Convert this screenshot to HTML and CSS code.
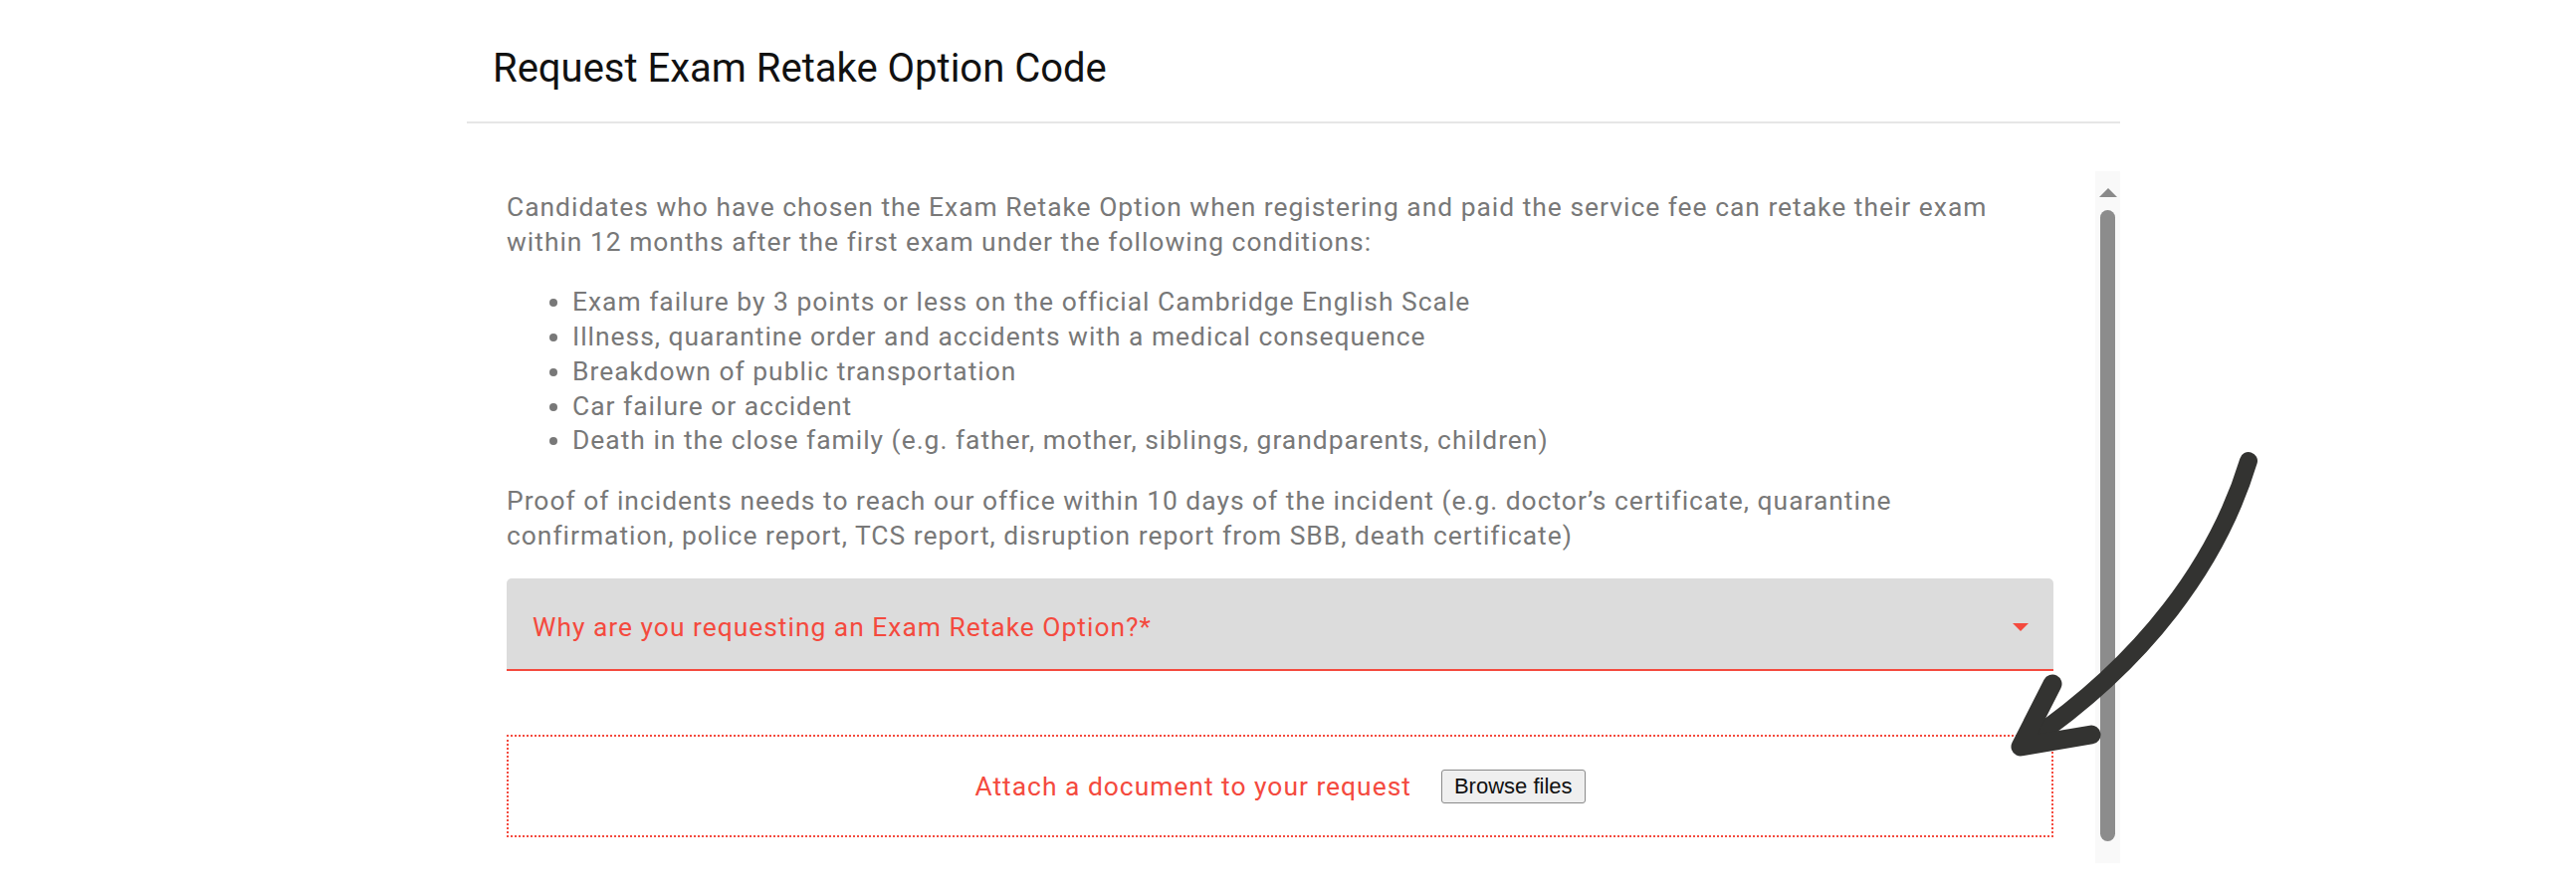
FILE: index.html
```html
<!DOCTYPE html>
<html lang="en">
<head>
<meta charset="utf-8">
<title>Request Exam Retake Option Code</title>
<link rel="stylesheet" href="styles.css">
</head>
<body>
<div class="dialog">
  <header class="dialog-header">
    <h1 class="dialog-title">Request Exam Retake Option Code</h1>
  </header>
  <div class="scroll-region">
    <div class="content">
      <p class="text">Candidates who have chosen the Exam Retake Option when registering and paid the service fee can retake their exam within 12 months after the first exam under the following conditions:</p>
      <ul class="text list">
        <li>Exam failure by 3 points or less on the official Cambridge English Scale</li>
        <li>Illness, quarantine order and accidents with a medical consequence</li>
        <li>Breakdown of public transportation</li>
        <li>Car failure or accident</li>
        <li>Death in the close family (e.g. father, mother, siblings, grandparents, children)</li>
      </ul>
      <p class="text">Proof of incidents needs to reach our office within 10 days of the incident (e.g. doctor’s certificate, quarantine confirmation, police report, TCS report, disruption report from SBB, death certificate)</p>
      <div class="select-field">
        <span class="select-label">Why are you requesting an Exam Retake Option?*</span>
        <span class="select-caret"></span>
      </div>
      <div class="dropzone">
        <span class="dropzone-label">Attach a document to your request</span>
        <button class="browse-btn" type="button">Browse files</button>
      </div>
    </div>
    <div class="scrollbar">
      <div class="scroll-up"></div>
      <div class="scroll-thumb"></div>
    </div>
  </div>
</div>
<svg class="annotation-arrow" width="2588" height="900" viewBox="0 0 2588 900" aria-hidden="true">
  <path d="M2259 463 C2228 565 2155 665 2036 746" fill="none" stroke="#333331" stroke-width="18" stroke-linecap="round"/>
  <path d="M2062 687 L2030 750 L2101 738" fill="none" stroke="#333331" stroke-width="19" stroke-linecap="round" stroke-linejoin="round"/>
</svg>
</body>
</html>
```
FILE: styles.css
```css
html, body {
  margin: 0;
  padding: 0;
  background: #ffffff;
}
body {
  width: 2588px;
  height: 900px;
  overflow: hidden;
  font-family: Roboto, "Liberation Sans", sans-serif;
}
.dialog {
  margin-left: 469px;
  width: 1661px;
}
.dialog-header {
  padding: 47px 0 31px 26px;
  border-bottom: 2px solid #e6e6e6;
}
.dialog-title {
  margin: 0;
  font-size: 40px;
  line-height: 44px;
  font-weight: 400;
  color: #111111;
}
.scroll-region {
  margin-top: 48px;
  height: 695px;
  display: flex;
}
.content {
  flex: 1;
  padding: 19px 42px 0 40px;
  overflow: hidden;
}
.text {
  font-size: 26.4px;
  letter-spacing: 1px;
  line-height: 34.7px;
  color: #787878;
  margin: 0 0 26px 0;
}
.list {
  padding-left: 66px;
}
.select-field {
  height: 91px;
  background: #dcdcdc;
  border-bottom: 2px solid #f44a3e;
  border-radius: 5px 5px 0 0;
  display: flex;
  align-items: center;
  padding: 0 25px 0 26px;
  justify-content: space-between;
}
.select-label {
  font-size: 26.4px;
  letter-spacing: 1px;
  color: #f44a3e;
  padding-top: 6px;
}
.select-caret {
  width: 0;
  height: 0;
  border-left: 8px solid transparent;
  border-right: 8px solid transparent;
  border-top: 8px solid #f44a3e;
  margin-top: 6px;
}
.dropzone {
  margin-top: 64px;
  height: 99px;
  border: 2px dotted #f44a3e;
  display: flex;
  align-items: center;
  justify-content: center;
  gap: 30px;
}
.dropzone-label {
  font-size: 26.4px;
  letter-spacing: 1px;
  color: #f44a3e;
}
.browse-btn {
  font-family: "Liberation Sans", Arial, sans-serif;
  font-size: 22px;
  height: 34px;
  padding: 0 12px;
  background: #efefef;
  border: 1px solid #8a8a8a;
  border-radius: 3px;
  color: #111111;
}
.scrollbar {
  width: 25px;
  background: #f9f9f9;
  display: flex;
  flex-direction: column;
  align-items: center;
}
.scroll-up {
  margin-top: 17px;
  width: 0;
  height: 0;
  border-left: 9px solid transparent;
  border-right: 9px solid transparent;
  border-bottom: 9px solid #8a8a8a;
}
.scroll-thumb {
  margin-top: 13px;
  width: 15px;
  height: 634px;
  border-radius: 8px;
  background: #8c8c8c;
}
.annotation-arrow {
  position: absolute;
  left: 0;
  top: 0;
  pointer-events: none;
}
```
